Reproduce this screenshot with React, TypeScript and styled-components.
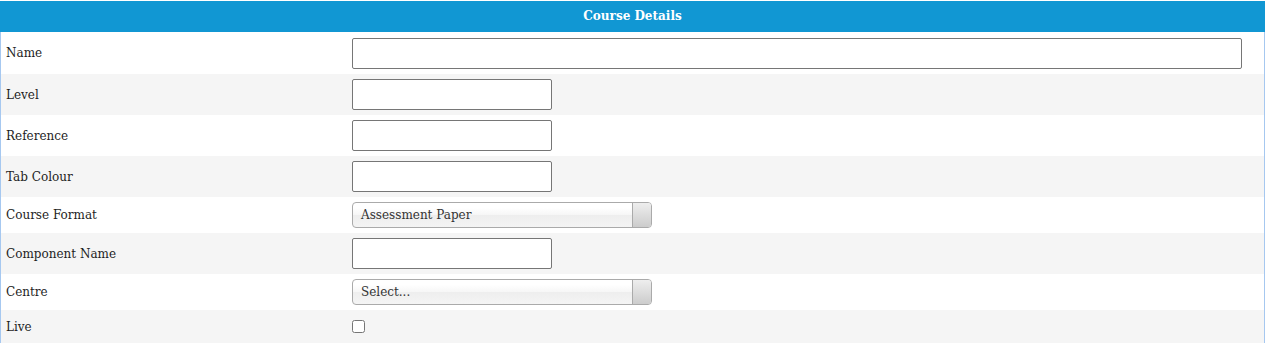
import styled, { createGlobalStyle } from "styled-components";

const GlobalStyle = createGlobalStyle`
  body {
    margin: 0;
    background: #ffffff;
    font-family: "DejaVu Serif", "Liberation Serif", serif;
  }
`;

type FieldKind = "text" | "wide" | "select" | "check";

interface FieldRow {
  label: string;
  kind: FieldKind;
  value?: string;
}

const rows: FieldRow[] = [
  { label: "Name", kind: "wide" },
  { label: "Level", kind: "text" },
  { label: "Reference", kind: "text" },
  { label: "Tab Colour", kind: "text" },
  { label: "Course Format", kind: "select", value: "Assessment Paper" },
  { label: "Component Name", kind: "text" },
  { label: "Centre", kind: "select", value: "Select..." },
  { label: "Live", kind: "check" },
];

const App = () => {
  return (
    <>
      <GlobalStyle />
      <Panel>
        <Header>Course Details</Header>
        <Body>
          {rows.map((row, i) => (
            <Row key={row.label} $striped={i % 2 === 1}>
              <Label>{row.label}</Label>
              <Value $kind={row.kind}>
                {row.kind === "wide" && <TextInput $wide />}
                {row.kind === "text" && <TextInput />}
                {row.kind === "select" && (
                  <Select>
                    <SelectText>{row.value}</SelectText>
                    <SelectArrow />
                  </Select>
                )}
                {row.kind === "check" && <CheckBox type="checkbox" />}
              </Value>
            </Row>
          ))}
        </Body>
      </Panel>
    </>
  );
};

export default App;

const Panel = styled.div`
  width: 1265px;
  padding-top: 1px;
`;

const Header = styled.div`
  height: 31px;
  line-height: 31px;
  background: #1197d3;
  color: #ffffff;
  font-size: 12px;
  font-weight: bold;
  text-align: center;
`;

const Body = styled.div`
  border-left: 1px solid #a6c8f0;
  border-right: 1px solid #a6c8f0;
`;

const Row = styled.div<{ $striped: boolean }>`
  display: grid;
  grid-template-columns: 345px 1fr;
  align-items: center;
  background: ${(p) => (p.$striped ? "#f5f5f5" : "#ffffff")};
`;

const Label = styled.div`
  padding-left: 5px;
  color: #1e1e1e;
  font-size: 12px;
`;

const heights: Record<FieldKind, string> = {
  wide: "42px",
  text: "41px",
  select: "36px",
  check: "33px",
};

const Value = styled.div<{ $kind: FieldKind }>`
  display: flex;
  align-items: center;
  padding-left: 6px;
  height: ${(p) => heights[p.$kind]};
`;

const TextInput = styled.input<{ $wide?: boolean }>`
  box-sizing: border-box;
  width: ${(p) => (p.$wide ? "calc(100% - 22px)" : "200px")};
  height: 31px;
  margin: 0;
  border: 1px solid #767676;
  border-radius: 2px;
  background: #ffffff;
`;

const Select = styled.div`
  box-sizing: border-box;
  display: flex;
  width: 300px;
  height: 26px;
  border: 1px solid #aaaaaa;
  border-radius: 4px;
  background: linear-gradient(#ffffff 20%, #f6f6f6 50%, #eeeeee 52%, #f4f4f4 100%);
  overflow: hidden;
`;

const SelectText = styled.span`
  flex: 1;
  padding-left: 8px;
  line-height: 24px;
  color: #333333;
  font-size: 12px;
`;

const SelectArrow = styled.span`
  width: 18px;
  border-left: 1px solid #aaaaaa;
  background: linear-gradient(#eeeeee, #cccccc);
`;

const CheckBox = styled.input`
  width: 13px;
  height: 13px;
  margin: 0;
`;
